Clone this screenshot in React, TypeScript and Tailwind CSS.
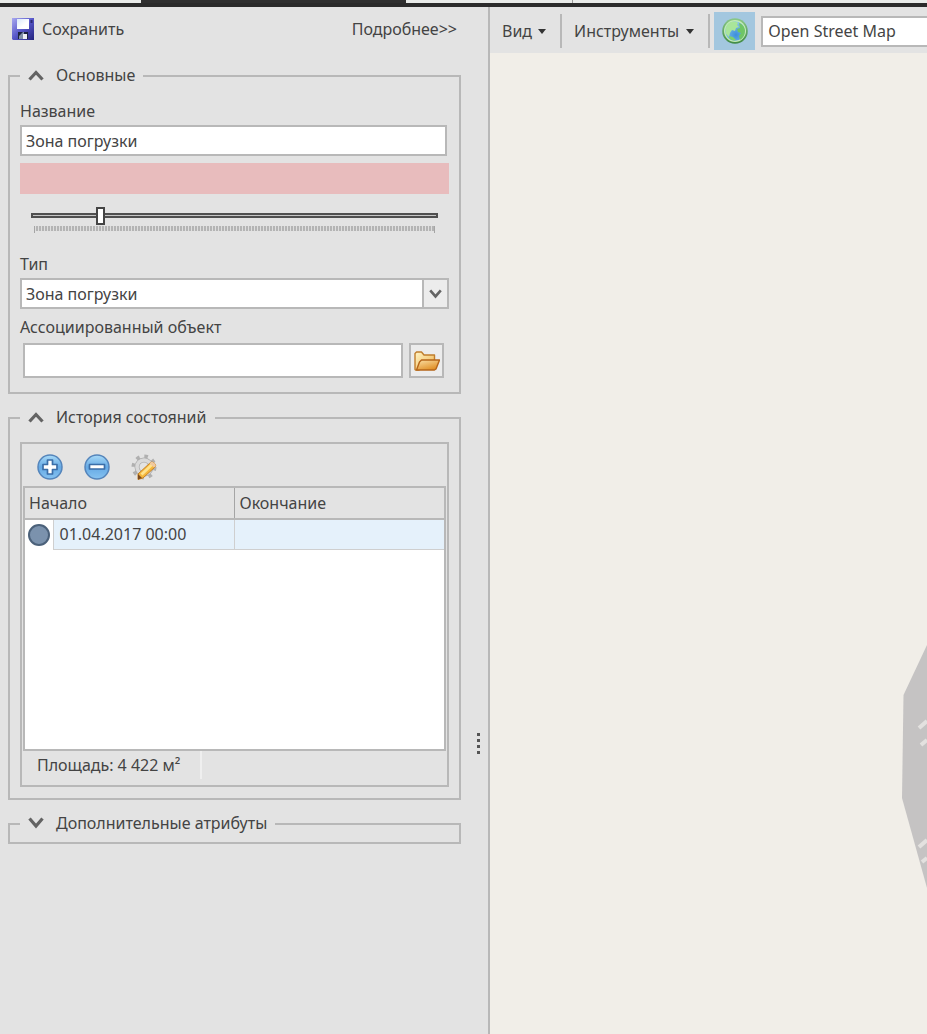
import { useState, type ReactNode } from "react";
import clsx from "clsx";

type GroupProps = {
  title: string;
  open: boolean;
  onToggle: () => void;
  children: ReactNode;
};

const Chevron = ({ up, className }: { up?: boolean; className?: string }) => (
  <svg viewBox="0 0 16 12" fill="none" className={className} aria-hidden="true">
    <path d={up ? "M1.5 10.5 8 3.5l6.500 7" : "M1.5 1.5 8 9l6.500-7.5"} stroke="#636363" strokeWidth="3.200" />
  </svg>
);

const Caret = () => (
  <svg viewBox="0 0 8 5" className="w-2 h-[5px]" aria-hidden="true">
    <path d="M0 0h8L4 5z" fill="#333" />
  </svg>
);

const SaveIcon = () => (
  <svg viewBox="0 0 22 22" className="w-[22px] h-[22px]" aria-hidden="true">
    <defs>
      <linearGradient id="save" x1="0" y1="0" x2="1" y2="1">
        <stop offset="0" stopColor="#a9a9f0" />
        <stop offset="0.5" stopColor="#5656c8" />
        <stop offset="1" stopColor="#23237c" />
      </linearGradient>
      <linearGradient id="paper" x1="0" y1="0" x2="1" y2="1">
        <stop offset="0" stopColor="#d9e9fb" />
        <stop offset="0.6" stopColor="#fff" />
      </linearGradient>
    </defs>
    <path d="M0 0h22v22H1l-1-1z" fill="url(#save)" />
    <path d="M5 1h12v10H5z" fill="url(#paper)" />
    <path d="M18.500 2h2v3h-2z" fill="#2a2a72" />
    <path d="M6 14h10v7H6z" fill="#1d2340" />
    <path d="M7 18l4-4h1v7H7z" fill="#7f8fa6" />
    <path d="M11 16h4v5h-4z" fill="#eef1f4" />
  </svg>
);

const GlobeIcon = () => (
  <svg viewBox="0 0 26 26" className="w-[26px] h-[26px]" aria-hidden="true">
    <defs>
      <radialGradient id="sea" cx="0.55" cy="0.7" r="0.7">
        <stop offset="0" stopColor="#3c8fdc" />
        <stop offset="1" stopColor="#8fc9e8" />
      </radialGradient>
      <linearGradient id="rim" x1="0" y1="0" x2="0" y2="1">
        <stop offset="0" stopColor="#8cc98a" />
        <stop offset="1" stopColor="#3f8a45" />
      </linearGradient>
    </defs>
    <circle cx="13" cy="13" r="12.800" fill="url(#rim)" />
    <circle cx="13" cy="13" r="11" fill="#c5ecb4" />
    <circle cx="13" cy="13" r="9.800" fill="url(#sea)" />
    <path d="M4 16C2.500 10 5 5 10 3.800c3-.8 5 0 6 1.200l-1 2 2 2-3 1-1 3-3-1-2 3-1 4z" fill="#a9e59a" />
    <path d="M17 5c4 1 6 5 6 8 0 4-2 7-5 9l-1-4 2-3-3-1-1-3 3-1z" fill="#6fc565" />
    <path d="M7 18l4 1 3 3c-3 1-5 0-7-2z" fill="#7fcf6e" />
  </svg>
);

const FolderIcon = () => (
  <svg viewBox="0 0 26 20" className="w-[26px] h-5" aria-hidden="true">
    <defs>
      <linearGradient id="back" x1="0" y1="0" x2="1" y2="1">
        <stop offset="0" stopColor="#fff6c8" />
        <stop offset="1" stopColor="#efb04c" />
      </linearGradient>
      <linearGradient id="front" x1="0" y1="0" x2="0.6" y2="1">
        <stop offset="0" stopColor="#fbe0a6" />
        <stop offset="1" stopColor="#e08f26" />
      </linearGradient>
    </defs>
    <path d="M1 18.500V2.500L2.500 1h5L10 4h10.500v5L5 19H1.500z" fill="url(#back)" stroke="#c07d2c" strokeWidth="1.400" strokeLinejoin="round" />
    <path d="M5.500 11 7.500 9h18L22 18l-1.500 1H2.500z" fill="url(#front)" stroke="#b5651a" strokeWidth="1.400" strokeLinejoin="round" />
  </svg>
);

const RoundIcon = ({ plus }: { plus?: boolean }) => (
  <svg viewBox="0 0 26 26" className="w-[26px] h-[26px]" aria-hidden="true">
    <defs>
      <linearGradient id={plus ? "plusFill" : "minusFill"} x1="0" y1="0" x2="0" y2="1">
        <stop offset="0" stopColor="#a9dbf8" />
        <stop offset="0.5" stopColor="#66a9e4" />
        <stop offset="1" stopColor="#86c3f1" />
      </linearGradient>
    </defs>
    <circle cx="13" cy="13" r="12" fill={plus ? "url(#plusFill)" : "url(#minusFill)"} stroke="#5585bb" strokeWidth="1.500" />
    {plus ? (
      <path d="M10.500 6h5v4.500H20v5h-4.500V20h-5v-4.500H6v-5h4.500z" fill="#fff" stroke="#3b6ea8" strokeWidth="1.700" strokeLinejoin="round" />
    ) : (
      <path d="M5.500 10.500h15v4.500h-15z" fill="#fff" stroke="#3b6ea8" strokeWidth="1.700" strokeLinejoin="round" />
    )}
  </svg>
);

const GearPencilIcon = () => (
  <svg viewBox="0 0 26 26" className="w-[26px] h-[26px]" aria-hidden="true">
    <circle cx="13" cy="13" r="10.500" fill="none" stroke="#b0b0b0" strokeWidth="4" strokeDasharray="3.500 4.750" />
    <circle cx="13" cy="13" r="7" fill="none" stroke="#adadad" strokeWidth="5" />
    <circle cx="13" cy="13" r="7" fill="none" stroke="#dadada" strokeWidth="3.500" />
    <path d="M7 20 19.500 8.500c2-1.500 6 1.500 5 4L12 24l-5 1.500z" fill="#f5b83d" stroke="#c67f22" />
    <path d="M9.500 19.500 20 9.800l2 1.700L11.500 21.500z" fill="#ffe38e" />
    <path d="M7 20l4 4-4 1.500z" fill="#7a4a22" />
    <path d="M19.500 8.500c2-1.500 6 1.500 5 4l-1.500 1-4.500-4z" fill="#f0c9a0" />
  </svg>
);

const Group = ({ title, open, onToggle, children }: GroupProps) => (
  <fieldset className="min-w-0 border-2 border-[#b8b8b8] px-[10px]">
    <legend className="px-2">
      <button type="button" onClick={onToggle} aria-expanded={open} className="flex items-center gap-3 h-6 pb-[2px]">
        <Chevron up={open} className="w-4 h-3" />
        {title}
      </button>
    </legend>
    {open ? children : <div className="h-[6px]" />}
  </fieldset>
);

const Sidebar = () => {
  const [mainOpen, setMainOpen] = useState(true);
  const [historyOpen, setHistoryOpen] = useState(true);
  const [extraOpen, setExtraOpen] = useState(false);
  const [opacity, setOpacity] = useState(16);

  return (
    <aside className="flex w-[490px] shrink-0 border-r-2 border-[#b8b8b8]">
      <div className="flex-1 min-w-0 pl-2">
        <div className="flex items-center justify-between h-[43px] px-1">
          <button type="button" className="flex items-center gap-2">
            <SaveIcon />
            Сохранить
          </button>
          <a href="#details">Подробнее&gt;&gt;</a>
        </div>

        <div className="flex flex-col gap-3 pt-[14px]">
          <Group title="Основные" open={mainOpen} onToggle={() => setMainOpen(!mainOpen)}>
            <div className="flex flex-col pt-[11px] pb-[14px]">
              <label htmlFor="name" className="h-[26px]">Название</label>
              <input
                id="name"
                defaultValue="Зона погрузки"
                className="h-[31px] mr-[2px] px-1 bg-white border-2 border-[#b8b8b8] outline-none"
              />
              <button type="button" aria-label="Цвет зоны" className="h-[31px] mt-[7px] bg-[#e8bcbd]" />
              <div className="px-[11px] pt-3">
                <input
                  type="range"
                  aria-label="Прозрачность"
                  min={0}
                  max={100}
                  value={opacity}
                  onChange={(e) => setOpacity(Number(e.target.value))}
                  className="block w-full h-[18px] appearance-none bg-transparent [&::-webkit-slider-runnable-track]:h-[5px] [&::-webkit-slider-runnable-track]:border-2 [&::-webkit-slider-runnable-track]:border-[#4f4f4f] [&::-webkit-slider-runnable-track]:bg-[#c5c5c5] [&::-webkit-slider-thumb]:appearance-none [&::-webkit-slider-thumb]:w-[9px] [&::-webkit-slider-thumb]:h-[18px] [&::-webkit-slider-thumb]:-mt-2 [&::-webkit-slider-thumb]:border-2 [&::-webkit-slider-thumb]:border-[#444] [&::-webkit-slider-thumb]:bg-white"
                />
                <div className="h-[7px] mt-[2px] mx-[3px] pb-[2px] border-x border-[#a5a5a5]">
                  <div className="h-[5px] bg-[repeating-linear-gradient(90deg,#dedede_0_1px,#b4b4b4_1px_3px)]" />
                </div>
              </div>
              <label htmlFor="kind" className="h-6 mt-[19px]">Тип</label>
              <div className="relative mt-[2px]">
                <select
                  id="kind"
                  className="block w-full h-[31px] px-1 appearance-none bg-white border-2 border-[#b8b8b8] outline-none"
                >
                  <option>Зона погрузки</option>
                </select>
                <span className="absolute right-0 inset-y-0 w-[27px] flex items-center justify-center border-2 border-[#b8b8b8] bg-[#ececec] pointer-events-none">
                  <Chevron className="w-[13px] h-[10px]" />
                </span>
              </div>
              <label htmlFor="linked" className="h-6 mt-[6px]">Ассоциированный объект</label>
              <div className="flex gap-[6px] pl-[3px] pr-[5px] mt-1">
                <input id="linked" className="flex-1 min-w-0 h-[35px] px-1 bg-white border-2 border-[#b8b8b8] outline-none" />
                <button
                  type="button"
                  aria-label="Выбрать объект"
                  className="w-[35px] h-[35px] flex items-center justify-center border-2 border-[#b8b8b8] bg-[#ececec]"
                >
                  <FolderIcon />
                </button>
              </div>
            </div>
          </Group>

          <Group title="История состояний" open={historyOpen} onToggle={() => setHistoryOpen(!historyOpen)}>
            <div className="mt-3 mb-[11px] border-2 border-[#b8b8b8] px-[1px]">
              <div className="flex items-center gap-[21px] h-[42px] pt-1 pl-[14px]">
                <button type="button" aria-label="Добавить"><RoundIcon plus /></button>
                <button type="button" aria-label="Удалить"><RoundIcon /></button>
                <button type="button" aria-label="Изменить"><GearPencilIcon /></button>
              </div>
              <div className="h-[265px] bg-white border-2 border-[#b8b8b8]">
                <table className="w-full table-fixed border-collapse text-left">
                  <colgroup>
                    <col className="w-7" />
                    <col className="w-[181px]" />
                    <col />
                  </colgroup>
                  <thead>
                    <tr className="h-[31px] bg-[#e3e3e3] border-b-2 border-[#b8b8b8]">
                      <th colSpan={2} className="p-0 pl-1 font-normal border-r border-[#a5a5a5]">Начало</th>
                      <th className="p-0 pl-[5px] font-normal">Окончание</th>
                    </tr>
                  </thead>
                  <tbody>
                    <tr className="h-[30px]">
                      <td className="p-0 pl-[3px]">
                        <span className="block w-[22px] h-[22px] rounded-full border-2 border-[#4b617a] bg-[#7b92ad]" />
                      </td>
                      <td className="p-0 pl-[6px] bg-[#e5f1fb] border border-t-0 border-[#cfcfcf]">01.04.2017 00:00</td>
                      <td className="p-0 bg-[#e5f1fb] border-b border-[#cfcfcf]" />
                    </tr>
                  </tbody>
                </table>
              </div>
              <div className="flex h-[34px]">
                <span className="h-7 pl-[14px] pr-5 border-r-2 border-[#efefef] leading-7">Площадь: 4 422 м²</span>
              </div>
            </div>
          </Group>

          <Group title="Дополнительные атрибуты" open={extraOpen} onToggle={() => setExtraOpen(!extraOpen)}>
            <div className="h-20" />
          </Group>
        </div>
      </div>

      <div className="w-[27px] flex flex-col items-center gap-[3px] pt-[726px] pl-[7px]">
        {[0, 1, 2, 3].map((dot) => (
          <span key={dot} className="w-[3px] h-[3px] bg-[#555]" />
        ))}
      </div>
    </aside>
  );
};

const MapView = () => (
  <main className="flex-1 min-w-0 flex flex-col">
    <div className="flex items-center h-[46px] shrink-0 pl-3 pt-[2px] overflow-hidden whitespace-nowrap">
      <button type="button" className="flex items-center gap-[6px] shrink-0">
        Вид <Caret />
      </button>
      <div className="w-[2px] h-[34px] ml-[14px] mr-3 bg-[#b8b8b8] shrink-0" />
      <button type="button" className="flex items-center gap-[7px] shrink-0">
        Инструменты <Caret />
      </button>
      <div className="w-[2px] h-[34px] ml-[14px] mr-1 bg-[#b8b8b8] shrink-0" />
      <button
        type="button"
        aria-label="Карта"
        className="w-[41px] h-[38px] shrink-0 flex items-center justify-center bg-[#a3c7df]"
      >
        <GlobeIcon />
      </button>
      <select
        aria-label="Источник карты"
        className="w-[212px] h-[31px] ml-[6px] px-[5px] shrink-0 appearance-none bg-white border-2 border-[#b8b8b8] outline-none"
      >
        <option>Open Street Map</option>
      </select>
    </div>
    <div className="relative flex-1 overflow-hidden bg-[#f1eee8]">
      <svg viewBox="0 0 25 243" className="absolute right-0 top-[592px] w-[25px] h-[243px]" aria-hidden="true">
        <path d="M25 0 1.500 50 0 153l25 90z" fill="#c5c3c3" />
        <path d="m17 83 8-7M19 100l6-5M17 202l8-7M20 217l5-4" stroke="#e3e1df" strokeWidth="4" />
      </svg>
    </div>
  </main>
);

const TopStrip = () => {
  const tabs = ["w-[141px] bg-[#e9ebe9]", "w-[265px] bg-[#303030]", "w-[167px] bg-[#e9ebe9] border-r border-[#999]", "flex-1 bg-[#e9ebe9]"];
  return (
    <div className="flex h-[7px] border-b-[4px] border-[#2b2b2b]">
      {tabs.map((tab) => (
        <div key={tab} className={clsx("h-full", tab)} />
      ))}
    </div>
  );
};

export default function App() {
  return (
    <div className="min-h-screen flex flex-col bg-[#e3e3e3] text-[#444] text-base leading-6 font-['Noto_Sans',sans-serif]">
      <TopStrip />
      <div className="flex flex-1">
        <Sidebar />
        <MapView />
      </div>
    </div>
  );
}
